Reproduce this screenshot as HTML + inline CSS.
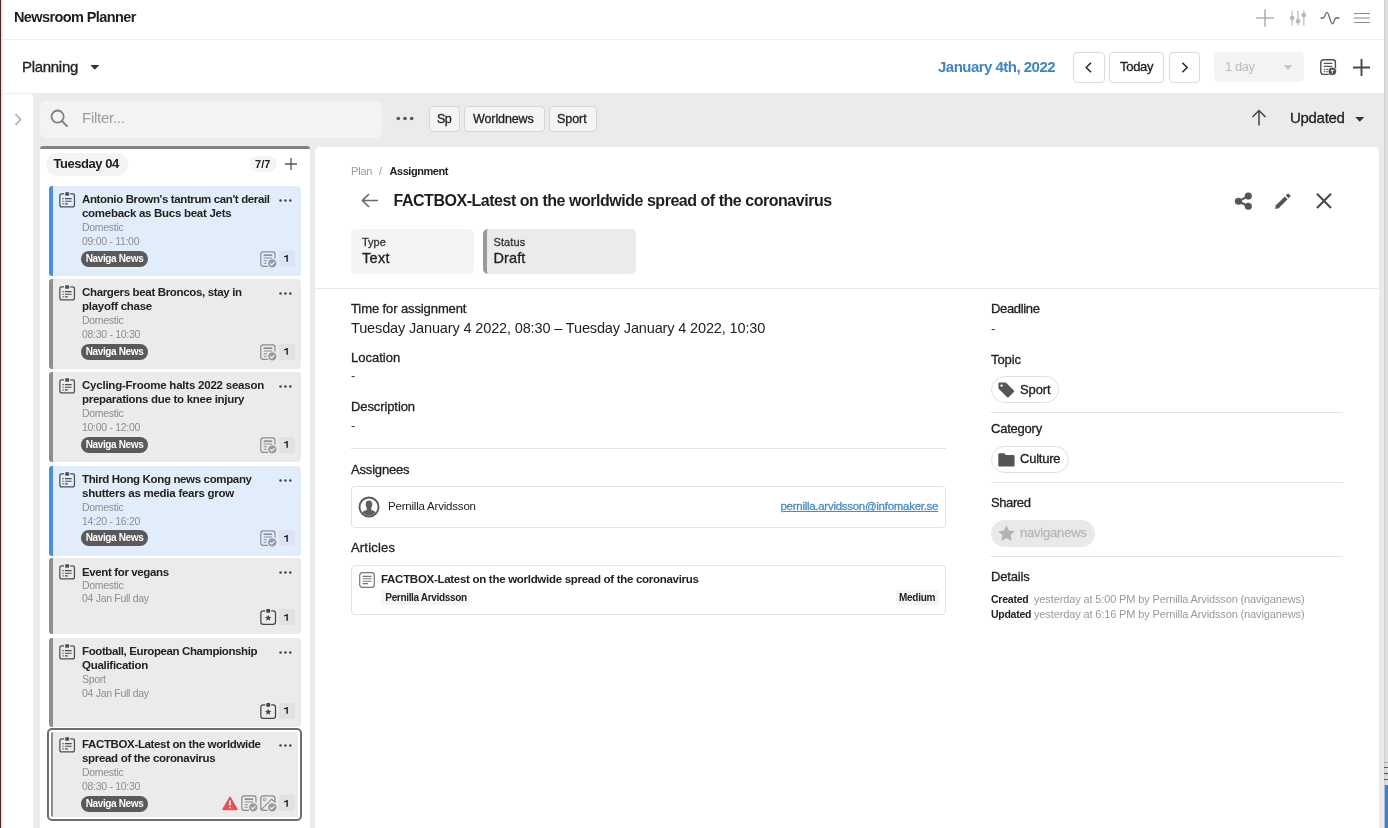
<!DOCTYPE html>
<html>
<head>
<meta charset="utf-8">
<title>Newsroom Planner</title>
<style>
*{box-sizing:border-box;margin:0;padding:0}
html,body{width:1388px;height:828px;overflow:hidden;background:#fff}
body{font-family:"Liberation Sans",sans-serif;color:#222;position:relative;font-size:12px}
#w{position:absolute;left:0;top:0;width:1388px;height:828px;overflow:hidden;will-change:transform}
.a{position:absolute}
.t{position:absolute;white-space:nowrap;line-height:1}
.b{font-weight:bold}
.m{-webkit-text-stroke:0.3px currentColor}
svg{position:absolute;overflow:visible}
/* bars */
#edgeL{left:0;top:0;width:1.3px;height:828px;background:#472828}
#edgeL2{left:1.3px;top:0;width:1.5px;height:828px;background:#f3e2e2}
#bar1{left:3px;top:0;width:1385px;height:40px;background:#fff;border-bottom:1px solid #efefef}
#bar2{left:3px;top:41px;width:1385px;height:52px;background:#fff}
#gray{left:3px;top:93px;width:1385px;height:735px;background:#ebebeb}
#side{left:3px;top:93px;width:30px;height:735px;background:#fff;border-top:1px solid #eeeeee;border-radius:0 3px 0 0}
#filter{left:40px;top:101px;width:342px;height:36.5px;background:#f3f3f3;border-radius:6px}
.btn{position:absolute;background:#fff;border:1px solid #dcdcdc;border-radius:4px;height:31px;top:52px}
.chip{position:absolute;top:106px;height:26px;background:#f4f4f4;border:1px solid #d6d6d6;border-radius:4px}
/* list column */
#col{left:40px;top:146px;width:270px;height:682px;background:#fff;border-top:3px solid #828282;border-radius:3px 3px 0 0}
.card{position:absolute;left:49px;width:252px;border-left:4px solid #8e8e8e;background:#ebebeb;border-radius:3px}
.card.blue{background:#e2edfb;border-left-color:#4a8fdc}
.ttl{position:absolute;left:82px;font-weight:bold;font-size:11.5px;line-height:14px;white-space:nowrap;color:#222;letter-spacing:-0.33px}
.sub{position:absolute;left:82px;font-size:10.5px;line-height:1;color:#8d8d8d;white-space:nowrap;letter-spacing:-0.3px}
.pill{position:absolute;left:81px;height:16px;width:67px;border-radius:8px;background:#5a5a5a;color:#fff;font-weight:bold;font-size:10px;line-height:16px;text-align:center;white-space:nowrap;letter-spacing:-0.36px}
.cnt{position:absolute;left:279px;width:16px;height:16px;background:#e1e1e1;border-radius:2px;font-size:10.5px;font-weight:bold;line-height:16px;text-align:center;color:#1c1c1c}
.cnt.cb{background:#dbe4f0}
/* detail */
#det{left:315px;top:147px;width:1064px;height:681px;background:#fff;border-radius:5px 5px 0 0}
.lbl{position:absolute;white-space:nowrap;line-height:1;font-size:13px;color:#222;letter-spacing:-0.1px;-webkit-text-stroke:0.3px #222}
.hr{position:absolute;height:1px;background:#e2e2e2}
</style>
</head>
<body>
<div id="w">
<div class="a" id="bar1"></div>
<div class="a" id="bar2"></div>
<div class="a" id="gray"></div>
<div class="a" id="side"></div>
<div class="a" id="edgeL"></div>
<div class="a" id="edgeL2"></div>

<!-- TOPBAR -->
<div class="t b" style="left:14px;top:10px;font-size:14.5px;letter-spacing:-0.6px;color:#1e1e1e">Newsroom Planner</div>
<svg style="left:1255px;top:8px" width="20" height="20" viewBox="0 0 20 20"><path d="M10 1.2V18.8M1.2 10H18.8" stroke="#b3b3b3" stroke-width="1.6" fill="none"/></svg>
<svg style="left:1289px;top:9px" width="18" height="18" viewBox="0 0 18 18"><path d="M3.2 1.5V16.5M9 1.5V16.5M14.8 1.5V16.5" stroke="#cdcdcd" stroke-width="1.6" fill="none"/><circle cx="3.2" cy="9" r="2.35" fill="#b9b9b9"/><circle cx="9" cy="12.2" r="2.35" fill="#b9b9b9"/><circle cx="14.8" cy="6" r="2.35" fill="#b9b9b9"/></svg>
<svg style="left:1320px;top:9px" width="20" height="18" viewBox="0 0 20 18"><path d="M1 9H3.2C5 9 5.3 3.4 7 3.4C9 3.4 10.4 14.8 12.4 14.8C14 14.8 14.3 9 16 9H19" stroke="#666" stroke-width="1.3" fill="none" stroke-linecap="round" stroke-linejoin="round"/></svg>
<svg style="left:1354px;top:12px" width="16" height="12" viewBox="0 0 16 12"><path d="M0 1.5H16M0 6H16M0 10.5H16" stroke="#8a8a8a" stroke-width="1.1" fill="none"/></svg>
<!-- TOPICONS -->

<!-- BAR2 -->
<div class="t m" style="left:22px;top:58.5px;font-size:15px;letter-spacing:-0.3px;color:#222">Planning</div>
<svg style="left:90px;top:65.3px" width="10" height="5" viewBox="0 0 10 5"><path d="M0.3 0H9.3L4.8 4.7Z" fill="#333"/></svg>
<div class="t b" style="left:938px;top:59px;font-size:15px;letter-spacing:-0.52px;color:#3f85c4">January 4th, 2022</div>
<div class="btn" style="left:1073px;width:32px"></div>
<svg style="left:1085.3px;top:62px" width="7.4" height="11" viewBox="0 0 8 12"><path d="M6.5 0.7L1.3 6L6.5 11.3" stroke="#222" stroke-width="1.6" fill="none"/></svg>
<div class="btn" style="left:1109px;width:55px"></div>
<div class="t m" style="left:1120px;top:60px;font-size:13px;letter-spacing:-0.3px;color:#222">Today</div>
<div class="btn" style="left:1169px;width:31px"></div>
<svg style="left:1181.3px;top:62px" width="7.4" height="11" viewBox="0 0 8 12"><path d="M1.5 0.7L6.7 6L1.5 11.3" stroke="#222" stroke-width="1.6" fill="none"/></svg>
<div class="a" style="left:1214px;top:52px;width:90px;height:30px;background:#f4f4f4;border-radius:5px"></div>
<div class="t" style="left:1225px;top:59.5px;font-size:13px;letter-spacing:-0.45px;color:#bcbcbc">1 day</div>
<svg style="left:1283px;top:65px" width="10" height="5" viewBox="0 0 10 5"><path d="M0.5 0H9.5L5 4.7Z" fill="#c6c6c6"/></svg>
<svg style="left:1320px;top:59px" width="17" height="17" viewBox="0 0 17 17"><rect x="0.8" y="0.8" width="14.6" height="14.6" rx="2.6" fill="none" stroke="#4d4d4d" stroke-width="1.4"/><path d="M3.8 4.3H12.4M3.8 7.4H12.4M3.8 10.4H5.2M6.4 10.4H8.4M3.8 12.6H5.2M6.4 12.6H8" stroke="#555" stroke-width="1.2" fill="none"/><circle cx="12.3" cy="12.3" r="4.1" fill="#444" stroke="#fff" stroke-width="0.8"/><path d="M10.2 10.8H14.4L12.8 12.6V14.6H11.8V12.6Z" fill="#fff"/></svg>
<svg style="left:1352px;top:57.6px" width="19" height="19" viewBox="0 0 19 19"><path d="M9.5 1V18M1 9.5H18" stroke="#484848" stroke-width="1.9" fill="none"/></svg>
<!-- BAR2R -->

<!-- FILTERROW -->
<svg style="left:13.8px;top:113px" width="8" height="13" viewBox="0 0 8 13"><path d="M1.5 1L6.5 6.5L1.5 12" stroke="#b2b2b2" stroke-width="1.8" fill="none"/></svg>
<div class="a" id="filter"></div>
<svg style="left:49.6px;top:109.2px" width="19" height="19" viewBox="0 0 19 19"><circle cx="7.6" cy="7.6" r="6.1" fill="none" stroke="#808080" stroke-width="1.8"/><path d="M12 12L17.6 17.6" stroke="#808080" stroke-width="1.9" fill="none"/></svg>
<div class="t" style="left:82px;top:110px;font-size:15px;color:#9c9c9c;letter-spacing:-0.25px">Filter...</div>
<svg style="left:396px;top:116px" width="18" height="5" viewBox="0 0 18 5"><circle cx="2.3" cy="2.5" r="1.8" fill="#555"/><circle cx="9" cy="2.5" r="1.8" fill="#555"/><circle cx="15.7" cy="2.5" r="1.8" fill="#555"/></svg>
<div class="chip" style="left:429px;width:31px"></div><div class="t m" style="left:437px;top:113px;font-size:12.5px;letter-spacing:-0.6px">Sp</div>
<div class="chip" style="left:464px;width:81px"></div><div class="t m" style="left:473px;top:113px;font-size:12.5px;letter-spacing:-0.1px">Worldnews</div>
<div class="chip" style="left:549px;width:48px"></div><div class="t m" style="left:557px;top:113px;font-size:12.5px;letter-spacing:-0.05px">Sport</div>
<svg style="left:1251px;top:109px" width="16" height="17" viewBox="0 0 16 17"><path d="M8 16.5V1.5M1.5 8L8 1.5L14.5 8" stroke="#444" stroke-width="1.5" fill="none"/></svg>
<div class="t m" style="left:1290px;top:110px;font-size:15px;letter-spacing:-0.3px;color:#222">Updated</div>
<svg style="left:1355px;top:117px" width="10" height="5" viewBox="0 0 10 5"><path d="M0.3 0H9.3L4.8 4.7Z" fill="#333"/></svg>

<!-- COLUMN -->
<div class="a" id="col"></div>
<div class="a" style="left:46px;top:153px;width:82px;height:23px;border-radius:12px;background:#f4f4f4"></div>
<div class="t b" style="left:53.5px;top:157px;font-size:13px;letter-spacing:-0.45px;color:#222">Tuesday 04</div>
<div class="a" style="left:250px;top:156px;width:27px;height:16px;border-radius:8px;background:#f4f4f4"></div>
<div class="t b" style="left:255px;top:158.5px;font-size:11px;letter-spacing:0.1px;color:#222">7/7</div>
<svg style="left:285px;top:158px" width="12" height="12" viewBox="0 0 12 12"><path d="M6 0V12M0 6H12" stroke="#555" stroke-width="1.3" fill="none"/></svg>
<!-- CARDS_BEGIN -->
<div class="card blue" style="top:186px;height:90px"></div>
<svg style="left:58.9px;top:191.9px" width="16.3" height="16.3" viewBox="0 0 17 17"><path d="M5.2 1.9H2.9Q0.9 1.9 0.9 3.9V13.6Q0.9 15.6 2.9 15.6H14.1Q16.1 15.6 16.1 13.6V3.9Q16.1 1.9 14.1 1.9H11.8" fill="none" stroke="rgba(28,30,34,0.76)" stroke-width="1.3"/><rect x="6.4" y="0.2" width="4.2" height="3.6" rx="0.9" fill="rgba(28,30,34,0.76)"/><path d="M3.6 6.9H4.9M6.2 6.9H13.2M3.6 9.7H4.9M6.2 9.7H13.2M3.6 12.4H4.9M6.2 12.4H9.2" stroke="rgba(28,30,34,0.76)" stroke-width="1.2" fill="none"/></svg>
<svg style="left:279.3px;top:199px" width="13" height="3" viewBox="0 0 13 3"><circle cx="1.5" cy="1.5" r="1.25" fill="#444"/><circle cx="6.4" cy="1.5" r="1.25" fill="#444"/><circle cx="11.3" cy="1.5" r="1.25" fill="#444"/></svg>
<div class="ttl" style="top:191.6px;letter-spacing:-0.372px">Antonio Brown's tantrum can't derail</div>
<div class="ttl" style="top:205.6px;letter-spacing:-0.281px">comeback as Bucs beat Jets</div>
<div class="sub" style="top:222.2px">Domestic</div>
<div class="sub" style="top:235.6px">09:00 - 11:00</div>
<div class="pill" style="top:251px">Naviga News</div>
<svg style="left:260px;top:250.8px" width="17" height="17" viewBox="0 0 17 17"><path d="M8 15.4H3.2Q0.8 15.4 0.8 13V3.2Q0.8 0.8 3.2 0.8H12.6Q15 0.8 15 3.2V7.6" fill="none" stroke="#8b9097" stroke-width="1.2"/><path d="M3.6 4.2H12.2" stroke="#8b9097" stroke-width="1.7" fill="none"/><path d="M3.6 7H12.2M3.6 9.7H7M3.6 12.2H6.6" stroke="#8b9097" stroke-width="1.15" fill="none"/><circle cx="12.3" cy="12.4" r="4.2" fill="#979ca3"/><path d="M10.2 12.5L11.7 14L14.4 11" stroke="#fff" stroke-width="1.1" fill="none"/></svg>
<div class="cnt cb" style="top:250.7px"><svg style="left:4.5px;top:4.7px" width="4" height="6.7" viewBox="0 0 4 6.7"><path d="M3.85 0V6.7H2.45V1.65L0.15 2.45V1.3L3.45 0Z" fill="#1c1c1c"/></svg></div>
<div class="card" style="top:279px;height:90px"></div>
<svg style="left:58.9px;top:284.9px" width="16.3" height="16.3" viewBox="0 0 17 17"><path d="M5.2 1.9H2.9Q0.9 1.9 0.9 3.9V13.6Q0.9 15.6 2.9 15.6H14.1Q16.1 15.6 16.1 13.6V3.9Q16.1 1.9 14.1 1.9H11.8" fill="none" stroke="rgba(28,30,34,0.76)" stroke-width="1.3"/><rect x="6.4" y="0.2" width="4.2" height="3.6" rx="0.9" fill="rgba(28,30,34,0.76)"/><path d="M3.6 6.9H4.9M6.2 6.9H13.2M3.6 9.7H4.9M6.2 9.7H13.2M3.6 12.4H4.9M6.2 12.4H9.2" stroke="rgba(28,30,34,0.76)" stroke-width="1.2" fill="none"/></svg>
<svg style="left:279.3px;top:292px" width="13" height="3" viewBox="0 0 13 3"><circle cx="1.5" cy="1.5" r="1.25" fill="#444"/><circle cx="6.4" cy="1.5" r="1.25" fill="#444"/><circle cx="11.3" cy="1.5" r="1.25" fill="#444"/></svg>
<div class="ttl" style="top:285.40000000000003px;letter-spacing:-0.343px">Chargers beat Broncos, stay in</div>
<div class="ttl" style="top:299.40000000000003px;letter-spacing:-0.269px">playoff chase</div>
<div class="sub" style="top:315.2px">Domestic</div>
<div class="sub" style="top:328.59999999999997px">08:30 - 10:30</div>
<div class="pill" style="top:344px">Naviga News</div>
<svg style="left:260px;top:343.8px" width="17" height="17" viewBox="0 0 17 17"><path d="M8 15.4H3.2Q0.8 15.4 0.8 13V3.2Q0.8 0.8 3.2 0.8H12.6Q15 0.8 15 3.2V7.6" fill="none" stroke="#8c8c8c" stroke-width="1.2"/><path d="M3.6 4.2H12.2" stroke="#8c8c8c" stroke-width="1.7" fill="none"/><path d="M3.6 7H12.2M3.6 9.7H7M3.6 12.2H6.6" stroke="#8c8c8c" stroke-width="1.15" fill="none"/><circle cx="12.3" cy="12.4" r="4.2" fill="#9b9b9b"/><path d="M10.2 12.5L11.7 14L14.4 11" stroke="#fff" stroke-width="1.1" fill="none"/></svg>
<div class="cnt" style="top:343.7px"><svg style="left:4.5px;top:4.7px" width="4" height="6.7" viewBox="0 0 4 6.7"><path d="M3.85 0V6.7H2.45V1.65L0.15 2.45V1.3L3.45 0Z" fill="#1c1c1c"/></svg></div>
<div class="card" style="top:372px;height:90px"></div>
<svg style="left:58.9px;top:377.9px" width="16.3" height="16.3" viewBox="0 0 17 17"><path d="M5.2 1.9H2.9Q0.9 1.9 0.9 3.9V13.6Q0.9 15.6 2.9 15.6H14.1Q16.1 15.6 16.1 13.6V3.9Q16.1 1.9 14.1 1.9H11.8" fill="none" stroke="rgba(28,30,34,0.76)" stroke-width="1.3"/><rect x="6.4" y="0.2" width="4.2" height="3.6" rx="0.9" fill="rgba(28,30,34,0.76)"/><path d="M3.6 6.9H4.9M6.2 6.9H13.2M3.6 9.7H4.9M6.2 9.7H13.2M3.6 12.4H4.9M6.2 12.4H9.2" stroke="rgba(28,30,34,0.76)" stroke-width="1.2" fill="none"/></svg>
<svg style="left:279.3px;top:385px" width="13" height="3" viewBox="0 0 13 3"><circle cx="1.5" cy="1.5" r="1.25" fill="#444"/><circle cx="6.4" cy="1.5" r="1.25" fill="#444"/><circle cx="11.3" cy="1.5" r="1.25" fill="#444"/></svg>
<div class="ttl" style="top:377.6px;letter-spacing:-0.224px">Cycling-Froome halts 2022 season</div>
<div class="ttl" style="top:392.40000000000003px;letter-spacing:-0.292px">preparations due to knee injury</div>
<div class="sub" style="top:408.2px">Domestic</div>
<div class="sub" style="top:421.59999999999997px">10:00 - 12:00</div>
<div class="pill" style="top:437px">Naviga News</div>
<svg style="left:260px;top:436.8px" width="17" height="17" viewBox="0 0 17 17"><path d="M8 15.4H3.2Q0.8 15.4 0.8 13V3.2Q0.8 0.8 3.2 0.8H12.6Q15 0.8 15 3.2V7.6" fill="none" stroke="#8c8c8c" stroke-width="1.2"/><path d="M3.6 4.2H12.2" stroke="#8c8c8c" stroke-width="1.7" fill="none"/><path d="M3.6 7H12.2M3.6 9.7H7M3.6 12.2H6.6" stroke="#8c8c8c" stroke-width="1.15" fill="none"/><circle cx="12.3" cy="12.4" r="4.2" fill="#9b9b9b"/><path d="M10.2 12.5L11.7 14L14.4 11" stroke="#fff" stroke-width="1.1" fill="none"/></svg>
<div class="cnt" style="top:436.7px"><svg style="left:4.5px;top:4.7px" width="4" height="6.7" viewBox="0 0 4 6.7"><path d="M3.85 0V6.7H2.45V1.65L0.15 2.45V1.3L3.45 0Z" fill="#1c1c1c"/></svg></div>
<div class="card blue" style="top:466px;height:90px"></div>
<svg style="left:58.9px;top:471.9px" width="16.3" height="16.3" viewBox="0 0 17 17"><path d="M5.2 1.9H2.9Q0.9 1.9 0.9 3.9V13.6Q0.9 15.6 2.9 15.6H14.1Q16.1 15.6 16.1 13.6V3.9Q16.1 1.9 14.1 1.9H11.8" fill="none" stroke="rgba(28,30,34,0.76)" stroke-width="1.3"/><rect x="6.4" y="0.2" width="4.2" height="3.6" rx="0.9" fill="rgba(28,30,34,0.76)"/><path d="M3.6 6.9H4.9M6.2 6.9H13.2M3.6 9.7H4.9M6.2 9.7H13.2M3.6 12.4H4.9M6.2 12.4H9.2" stroke="rgba(28,30,34,0.76)" stroke-width="1.2" fill="none"/></svg>
<svg style="left:279.3px;top:479px" width="13" height="3" viewBox="0 0 13 3"><circle cx="1.5" cy="1.5" r="1.25" fill="#444"/><circle cx="6.4" cy="1.5" r="1.25" fill="#444"/><circle cx="11.3" cy="1.5" r="1.25" fill="#444"/></svg>
<div class="ttl" style="top:471.6px;letter-spacing:-0.355px">Third Hong Kong news company</div>
<div class="ttl" style="top:485.6px;letter-spacing:-0.255px">shutters as media fears grow</div>
<div class="sub" style="top:502.2px">Domestic</div>
<div class="sub" style="top:515.6px">14:20 - 16:20</div>
<div class="pill" style="top:530.2px">Naviga News</div>
<svg style="left:260px;top:530.0px" width="17" height="17" viewBox="0 0 17 17"><path d="M8 15.4H3.2Q0.8 15.4 0.8 13V3.2Q0.8 0.8 3.2 0.8H12.6Q15 0.8 15 3.2V7.6" fill="none" stroke="#8b9097" stroke-width="1.2"/><path d="M3.6 4.2H12.2" stroke="#8b9097" stroke-width="1.7" fill="none"/><path d="M3.6 7H12.2M3.6 9.7H7M3.6 12.2H6.6" stroke="#8b9097" stroke-width="1.15" fill="none"/><circle cx="12.3" cy="12.4" r="4.2" fill="#979ca3"/><path d="M10.2 12.5L11.7 14L14.4 11" stroke="#fff" stroke-width="1.1" fill="none"/></svg>
<div class="cnt cb" style="top:529.9000000000001px"><svg style="left:4.5px;top:4.7px" width="4" height="6.7" viewBox="0 0 4 6.7"><path d="M3.85 0V6.7H2.45V1.65L0.15 2.45V1.3L3.45 0Z" fill="#1c1c1c"/></svg></div>
<div class="card" style="top:558px;height:75.5px"></div>
<svg style="left:58.9px;top:563.9px" width="16.3" height="16.3" viewBox="0 0 17 17"><path d="M5.2 1.9H2.9Q0.9 1.9 0.9 3.9V13.6Q0.9 15.6 2.9 15.6H14.1Q16.1 15.6 16.1 13.6V3.9Q16.1 1.9 14.1 1.9H11.8" fill="none" stroke="rgba(28,30,34,0.76)" stroke-width="1.3"/><rect x="6.4" y="0.2" width="4.2" height="3.6" rx="0.9" fill="rgba(28,30,34,0.76)"/><path d="M3.6 6.9H4.9M6.2 6.9H13.2M3.6 9.7H4.9M6.2 9.7H13.2M3.6 12.4H4.9M6.2 12.4H9.2" stroke="rgba(28,30,34,0.76)" stroke-width="1.2" fill="none"/></svg>
<svg style="left:279.3px;top:571px" width="13" height="3" viewBox="0 0 13 3"><circle cx="1.5" cy="1.5" r="1.25" fill="#444"/><circle cx="6.4" cy="1.5" r="1.25" fill="#444"/><circle cx="11.3" cy="1.5" r="1.25" fill="#444"/></svg>
<div class="ttl" style="top:564.6px;letter-spacing:-0.373px">Event for vegans</div>
<div class="sub" style="top:580.0px">Domestic</div>
<div class="sub" style="top:593.4px">04 Jan Full day</div>
<svg style="left:259.9px;top:609.0px" width="16.4" height="16.4" viewBox="0 0 17 17"><path d="M5.4 1.9H3.4Q0.9 1.9 0.9 4.4V13.4Q0.9 15.9 3.4 15.9H13.6Q16.1 15.9 16.1 13.4V4.4Q16.1 1.9 13.6 1.9H11.6" fill="none" stroke="#444" stroke-width="1.3"/><rect x="6.5" y="0.1" width="4" height="3.9" rx="1" fill="#444"/><path d="M8.5 5.9L9.45 8.1L11.85 8.3L10.03 9.88L10.58 12.22L8.5 10.98L6.42 12.22L6.97 9.88L5.15 8.3L7.55 8.1Z" fill="#444"/></svg>
<div class="cnt" style="top:609.1px"><svg style="left:4.5px;top:4.7px" width="4" height="6.7" viewBox="0 0 4 6.7"><path d="M3.85 0V6.7H2.45V1.65L0.15 2.45V1.3L3.45 0Z" fill="#1c1c1c"/></svg></div>
<div class="card" style="top:638px;height:89px"></div>
<svg style="left:58.9px;top:643.9px" width="16.3" height="16.3" viewBox="0 0 17 17"><path d="M5.2 1.9H2.9Q0.9 1.9 0.9 3.9V13.6Q0.9 15.6 2.9 15.6H14.1Q16.1 15.6 16.1 13.6V3.9Q16.1 1.9 14.1 1.9H11.8" fill="none" stroke="rgba(28,30,34,0.76)" stroke-width="1.3"/><rect x="6.4" y="0.2" width="4.2" height="3.6" rx="0.9" fill="rgba(28,30,34,0.76)"/><path d="M3.6 6.9H4.9M6.2 6.9H13.2M3.6 9.7H4.9M6.2 9.7H13.2M3.6 12.4H4.9M6.2 12.4H9.2" stroke="rgba(28,30,34,0.76)" stroke-width="1.2" fill="none"/></svg>
<svg style="left:279.3px;top:651px" width="13" height="3" viewBox="0 0 13 3"><circle cx="1.5" cy="1.5" r="1.25" fill="#444"/><circle cx="6.4" cy="1.5" r="1.25" fill="#444"/><circle cx="11.3" cy="1.5" r="1.25" fill="#444"/></svg>
<div class="ttl" style="top:643.6px;letter-spacing:-0.387px">Football, European Championship</div>
<div class="ttl" style="top:657.6px;letter-spacing:-0.28px">Qualification</div>
<div class="sub" style="top:674.2px">Sport</div>
<div class="sub" style="top:687.6px">04 Jan Full day</div>
<svg style="left:259.9px;top:702.5px" width="16.4" height="16.4" viewBox="0 0 17 17"><path d="M5.4 1.9H3.4Q0.9 1.9 0.9 4.4V13.4Q0.9 15.9 3.4 15.9H13.6Q16.1 15.9 16.1 13.4V4.4Q16.1 1.9 13.6 1.9H11.6" fill="none" stroke="#444" stroke-width="1.3"/><rect x="6.5" y="0.1" width="4" height="3.9" rx="1" fill="#444"/><path d="M8.5 5.9L9.45 8.1L11.85 8.3L10.03 9.88L10.58 12.22L8.5 10.98L6.42 12.22L6.97 9.88L5.15 8.3L7.55 8.1Z" fill="#444"/></svg>
<div class="cnt" style="top:702.6px"><svg style="left:4.5px;top:4.7px" width="4" height="6.7" viewBox="0 0 4 6.7"><path d="M3.85 0V6.7H2.45V1.65L0.15 2.45V1.3L3.45 0Z" fill="#1c1c1c"/></svg></div>
<div class="a" style="left:47.4px;top:728.1px;width:254.4px;height:92.7px;border:2px solid #6e6e6e;border-radius:5px;background:#fff"></div>
<div class="card" style="left:51px;top:731.8px;width:247.2px;height:85.6px;border-left-width:2px;border-radius:2px"></div>
<svg style="left:58.9px;top:736.9px" width="16.3" height="16.3" viewBox="0 0 17 17"><path d="M5.2 1.9H2.9Q0.9 1.9 0.9 3.9V13.6Q0.9 15.6 2.9 15.6H14.1Q16.1 15.6 16.1 13.6V3.9Q16.1 1.9 14.1 1.9H11.8" fill="none" stroke="rgba(28,30,34,0.76)" stroke-width="1.3"/><rect x="6.4" y="0.2" width="4.2" height="3.6" rx="0.9" fill="rgba(28,30,34,0.76)"/><path d="M3.6 6.9H4.9M6.2 6.9H13.2M3.6 9.7H4.9M6.2 9.7H13.2M3.6 12.4H4.9M6.2 12.4H9.2" stroke="rgba(28,30,34,0.76)" stroke-width="1.2" fill="none"/></svg>
<svg style="left:279.3px;top:744px" width="13" height="3" viewBox="0 0 13 3"><circle cx="1.5" cy="1.5" r="1.25" fill="#444"/><circle cx="6.4" cy="1.5" r="1.25" fill="#444"/><circle cx="11.3" cy="1.5" r="1.25" fill="#444"/></svg>
<div class="ttl" style="top:736.6px;letter-spacing:-0.36px">FACTBOX-Latest on the worldwide</div>
<div class="ttl" style="top:750.6px;letter-spacing:-0.317px">spread of the coronavirus</div>
<div class="sub" style="top:767.2px">Domestic</div>
<div class="sub" style="top:780.6px">08:30 - 10:30</div>
<div class="pill" style="top:796px">Naviga News</div>
<svg style="left:222px;top:795.8000000000001px" width="16" height="15" viewBox="0 0 16 15"><path d="M8 1.3L14.9 13.3H1.1Z" fill="#e25555" stroke="#e25555" stroke-width="1.7" stroke-linejoin="round"/><path d="M8 4.4V9.6" stroke="#fff" stroke-width="1.5"/><circle cx="8" cy="11.6" r="0.85" fill="#fff"/></svg>
<svg style="left:241.3px;top:795.0px" width="17" height="17" viewBox="0 0 17 17"><path d="M8 15.4H3.2Q0.8 15.4 0.8 13V3.2Q0.8 0.8 3.2 0.8H12.6Q15 0.8 15 3.2V7.6" fill="none" stroke="#8a8a8a" stroke-width="1.2"/><path d="M3.6 4.2H12.2" stroke="#8a8a8a" stroke-width="1.7" fill="none"/><path d="M3.6 7H12.2M3.6 9.7H7M3.6 12.2H6.6" stroke="#8a8a8a" stroke-width="1.15" fill="none"/><circle cx="12.3" cy="12.4" r="4.2" fill="#9a9a9a"/><path d="M10.2 12.5L11.7 14L14.4 11" stroke="#fff" stroke-width="1.1" fill="none"/></svg>
<svg style="left:260.3px;top:795.0px" width="17" height="17" viewBox="0 0 17 17"><path d="M7.6 15.4H3.2Q0.8 15.4 0.8 13V3.2Q0.8 0.8 3.2 0.8H12.6Q15 0.8 15 3.2V7.4" fill="none" stroke="#8a8a8a" stroke-width="1.2"/><path d="M1.4 14.6L11.6 4.2L15 7" stroke="#8a8a8a" stroke-width="1.2" fill="none"/><circle cx="4.5" cy="4.5" r="1.3" fill="none" stroke="#8a8a8a" stroke-width="1"/><circle cx="12.3" cy="12.4" r="4.2" fill="#9a9a9a"/><path d="M10.2 12.5L11.7 14L14.4 11" stroke="#fff" stroke-width="1.1" fill="none"/></svg>
<div class="cnt" style="top:794.9000000000001px"><svg style="left:4.5px;top:4.7px" width="4" height="6.7" viewBox="0 0 4 6.7"><path d="M3.85 0V6.7H2.45V1.65L0.15 2.45V1.3L3.45 0Z" fill="#1c1c1c"/></svg></div>
<!-- CARDS_END -->

<!-- DETAIL -->
<div class="a" id="det"></div>
<div class="t" style="left:351px;top:165.5px;font-size:11px;letter-spacing:-0.2px;color:#9a9a9a">Plan</div>
<div class="t" style="left:379px;top:165.5px;font-size:11px;color:#9a9a9a">/</div>
<div class="t b" style="left:389.5px;top:165.5px;font-size:11px;letter-spacing:-0.45px;color:#222">Assignment</div>
<svg style="left:361px;top:193px" width="18" height="15" viewBox="0 0 18 15"><path d="M17 7.5H1.6M8 1L1.5 7.5L8 14" stroke="#6a6a6a" stroke-width="1.7" fill="none"/></svg>
<div class="t b" style="left:393.5px;top:192.8px;font-size:16px;letter-spacing:-0.47px;color:#1e1e1e">FACTBOX-Latest on the worldwide spread of the coronavirus</div>
<svg style="left:1234px;top:192px" width="19" height="19" viewBox="0 0 19 19"><path d="M14.3 4.1L4.4 9.2L14.3 14.2" stroke="#555" stroke-width="2.1" fill="none"/><circle cx="14.3" cy="4.1" r="3.55" fill="#555"/><circle cx="4.4" cy="9.2" r="3.55" fill="#555"/><circle cx="14.3" cy="14.2" r="3.55" fill="#555"/></svg>
<svg style="left:1275px;top:193px" width="17" height="17" viewBox="0 0 17 17"><g transform="translate(0.2,15.9) rotate(-45)" fill="#555"><path d="M0 0L3 -2H15.6V2H3Z"/><rect x="16.9" y="-2" width="3.3" height="4" rx="0.7"/></g></svg>
<svg style="left:1316px;top:193px" width="16" height="16" viewBox="0 0 16 16"><path d="M1 0.8L15 15M15 0.8L1 15" stroke="#4a4a4a" stroke-width="2.1" fill="none"/></svg>
<div class="a" style="left:351px;top:229px;width:123px;height:45px;background:#f4f4f4;border-radius:5px"></div>
<div class="t m" style="left:362px;top:237px;font-size:11px;color:#333">Type</div>
<div class="t m" style="left:362px;top:250.5px;font-size:14.5px;letter-spacing:0.3px;color:#222">Text</div>
<div class="a" style="left:483px;top:229px;width:153px;height:45px;background:#ebebeb;border-left:4px solid #999;border-radius:5px"></div>
<div class="t m" style="left:493.5px;top:237px;font-size:11px;letter-spacing:0.1px;color:#333">Status</div>
<div class="t m" style="left:493.5px;top:250.5px;font-size:14.5px;letter-spacing:0.1px;color:#222">Draft</div>
<div class="hr" style="left:315px;top:288px;width:1064px;background:#e9e9e9"></div>
<div class="lbl" style="left:351px;top:301.8px">Time for assignment</div>
<div class="t" style="left:351px;top:321px;font-size:14.5px;letter-spacing:-0.14px;color:#222">Tuesday January 4 2022, 08:30 – Tuesday January 4 2022, 10:30</div>
<div class="lbl" style="left:351px;top:351px;letter-spacing:0">Location</div>
<div class="t" style="left:351px;top:368.5px;font-size:13px;color:#333">-</div>
<div class="lbl" style="left:351px;top:399.8px">Description</div>
<div class="t" style="left:351px;top:418.7px;font-size:13px;color:#333">-</div>
<div class="hr" style="left:351px;top:448px;width:595px"></div>
<div class="lbl" style="left:351px;top:462.8px;letter-spacing:-0.18px">Assignees</div>
<div class="a" style="left:351px;top:486px;width:595px;height:42px;border:1px solid #e2e2e2;border-radius:4px"></div>
<svg style="left:358.4px;top:496px" width="22" height="22" viewBox="0 0 22 22"><defs><clipPath id="av"><circle cx="11" cy="11" r="8.4"/></clipPath></defs><circle cx="11" cy="11" r="9.5" fill="#fff" stroke="#5a5a5a" stroke-width="1.9"/><g clip-path="url(#av)" fill="#5e5e5e"><ellipse cx="11" cy="8.3" rx="3.3" ry="3.9"/><path d="M2 22Q2.6 15.2 8.7 14V11H13.3V14Q19.4 15.2 20 22Z"/></g></svg>
<div class="t" style="left:388px;top:501.3px;font-size:11.5px;letter-spacing:-0.2px;color:#222">Pernilla Arvidsson</div>
<div class="t m" style="left:780.5px;top:501.3px;font-size:11.5px;letter-spacing:-0.28px;color:#4a8cc9;text-decoration:underline">pernilla.arvidsson@infomaker.se</div>
<div class="lbl" style="left:351px;top:541px;letter-spacing:0.18px">Articles</div>
<div class="a" style="left:351px;top:565px;width:595px;height:50px;border:1px solid #e2e2e2;border-radius:4px"></div>
<svg style="left:359px;top:572px" width="16" height="16" viewBox="0 0 16 16"><rect x="0.7" y="0.7" width="14.6" height="14.6" rx="2.6" fill="none" stroke="#777" stroke-width="1.2"/><path d="M3.6 4.4H12.4M3.6 6.8H12.4M3.6 9.2H12.4M3.6 11.6H9" stroke="#777" stroke-width="1.1" fill="none"/></svg>
<div class="t b" style="left:381px;top:574px;font-size:11.5px;letter-spacing:-0.29px;color:#222">FACTBOX-Latest on the worldwide spread of the coronavirus</div>
<div class="a" style="left:381px;top:590px;width:89px;height:15px;background:#f5f5f5;border-radius:3px"></div>
<div class="t b" style="left:385.3px;top:593px;font-size:10px;letter-spacing:-0.33px;color:#222">Pernilla Arvidsson</div>
<div class="a" style="left:896px;top:590px;width:43px;height:15px;background:#f5f5f5;border-radius:3px"></div>
<div class="t b" style="left:899px;top:593px;font-size:10px;letter-spacing:-0.28px;color:#222">Medium</div>

<div class="lbl" style="left:991px;top:301.8px;letter-spacing:-0.33px">Deadline</div>
<div class="t" style="left:991px;top:322.3px;font-size:13px;color:#333">-</div>
<div class="lbl" style="left:991px;top:352.8px">Topic</div>
<div class="a" style="left:991px;top:376px;width:68px;height:27px;border:1px solid #dfdfdf;border-radius:14px;background:#fff"></div>
<svg style="left:998px;top:382px" width="17" height="16" viewBox="0 0 17 16"><path d="M0.4 1.6Q0.4 0.4 1.6 0.4H7.2Q7.8 0.4 8.3 0.9L15.9 8.5Q16.6 9.2 15.9 9.9L10.6 15.2Q9.9 15.9 9.2 15.2L0.9 6.9Q0.4 6.4 0.4 5.8Z" fill="#555"/><circle cx="3.6" cy="3.6" r="1.2" fill="#fff"/></svg>
<div class="t m" style="left:1020px;top:382.8px;font-size:13px;letter-spacing:-0.13px;color:#222">Sport</div>
<div class="hr" style="left:991px;top:412px;width:352px"></div>
<div class="lbl" style="left:991px;top:422px;letter-spacing:-0.22px">Category</div>
<div class="a" style="left:991px;top:446px;width:78px;height:27px;border:1px solid #dfdfdf;border-radius:14px;background:#fff"></div>
<svg style="left:998px;top:452.5px" width="17" height="14" viewBox="0 0 17 14"><path d="M0.3 1.5Q0.3 0.3 1.5 0.3H6.2L7.9 2H15.4Q16.6 2 16.6 3.2V12.4Q16.6 13.6 15.4 13.6H1.5Q0.3 13.6 0.3 12.4Z" fill="#555"/></svg>
<div class="t m" style="left:1020px;top:451.9px;font-size:13px;letter-spacing:-0.22px;color:#222">Culture</div>
<div class="hr" style="left:991px;top:482px;width:352px"></div>
<div class="lbl" style="left:991px;top:495.8px;letter-spacing:-0.4px">Shared</div>
<div class="a" style="left:991px;top:520px;width:104px;height:27px;border-radius:14px;background:#e9e9e9"></div>
<svg style="left:998px;top:525px" width="17" height="16" viewBox="0 0 17 16"><path d="M8.5 0.3L11 5.6L16.8 6.3L12.5 10.2L13.7 15.9L8.5 13L3.3 15.9L4.5 10.2L0.2 6.3L6 5.6Z" fill="#b3b3b3"/></svg>
<div class="t m" style="left:1020px;top:526.3px;font-size:13px;letter-spacing:-0.2px;color:#b8b8b8">naviganews</div>
<div class="hr" style="left:991px;top:556px;width:352px"></div>
<div class="lbl" style="left:991px;top:569.8px;letter-spacing:-0.16px">Details</div>
<div class="t b" style="left:991px;top:593.9px;font-size:10.5px;letter-spacing:-0.22px;color:#222">Created</div>
<div class="t" style="left:1034px;top:593.7px;font-size:11px;letter-spacing:-0.13px;color:#999">yesterday at 5:00 PM by Pernilla Arvidsson (naviganews)</div>
<div class="t b" style="left:991px;top:608.8px;font-size:10.5px;letter-spacing:-0.27px;color:#222">Updated</div>
<div class="t" style="left:1034px;top:608.6px;font-size:11px;letter-spacing:-0.13px;color:#999">yesterday at 6:16 PM by Pernilla Arvidsson (naviganews)</div>
<!-- DETAILBODY -->

<div class="a" style="left:1384px;top:0;width:4px;height:828px;background:#dfdfdf;border-left:1px solid #cdcdcd"></div>
<div class="a" style="left:1384px;top:762px;width:4px;height:1px;background:#a8a8a8"></div>
<div class="a" style="left:1384px;top:767px;width:4px;height:1px;background:#5a5a5a"></div>
<div class="a" style="left:1384px;top:773px;width:4px;height:1px;background:#5a5a5a"></div>
<div class="a" style="left:1385.5px;top:772px;width:1px;height:3px;background:#888"></div>
<div class="a" style="left:1384px;top:779px;width:4px;height:1px;background:#5a5a5a"></div>
<div class="a" style="left:1384px;top:785px;width:4px;height:43px;background:#4b7db6;border-left:1px solid #9fc0e4"></div>
<!-- EDGE_R -->
</div>
</body>
</html>
